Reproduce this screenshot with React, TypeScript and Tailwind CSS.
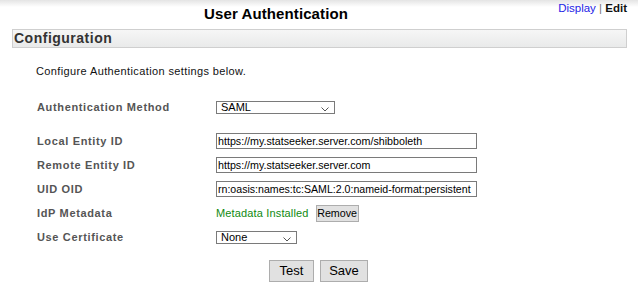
import React from "react";

const Chevron = () => (
  <svg width="8" height="5" viewBox="0 0 8 5" className="absolute right-[5px] bottom-[1px]">
    <path d="M0.5 0.5 L4 4 L7.5 0.5" fill="none" stroke="#555" strokeWidth="1" />
  </svg>
);

function Row({ label, children, className = "" }: { label: string; children: React.ReactNode; className?: string }) {
  return (
    <div className={"flex h-[24px] items-center " + className}>
      <div className="w-[179px] pl-[37px] box-content text-[11px] leading-[13px] font-bold tracking-[0.65px] text-[#555]">
        {label}
      </div>
      <div className="flex items-center">{children}</div>
    </div>
  );
}

export default function App() {
  return (
    <div
      className="w-[638px] h-[288px] bg-[linear-gradient(to_bottom,#e4e4e4_0px,#ffffff_7px)] text-black"
      style={{ fontFamily: '"Liberation Sans", Arial, sans-serif' }}
    >
      <div className="flex items-start">
        <div className="flex-1 pt-[5px] text-center text-[15px] leading-[17px] font-bold tracking-[0.1px]">
          User Authentication
        </div>
        <div className="w-[86px] pt-[1px] pr-[11px] text-right text-[11.5px] leading-[14px]">
          <span className="text-[#2323e6]">Display</span>
          <span className="text-[#777]"> | </span>
          <span className="font-bold text-[#111]">Edit</span>
        </div>
      </div>

      <div className="ml-[12px] mt-[7px] w-[615px] h-[19px] border border-[#cfcfcf] bg-[linear-gradient(to_bottom,#f6f6f6,#e9eaea)] pl-[1px] text-[14px] leading-[17px] font-bold tracking-[0.5px] text-[#333]">
        Configuration
      </div>

      <div className="mt-[17px] pl-[36px] text-[11px] leading-[13px] tracking-[0.38px] text-[#111]">
        Configure Authentication settings below.
      </div>

      <div className="mt-[17px]">
        <Row label="Authentication Method">
          <div className="relative w-[119px] h-[13px] border border-[#7a7a7a] bg-white pl-[4px] text-[11px] leading-[11px]">
            SAML
            <Chevron />
          </div>
        </Row>
        <Row label="Local Entity ID" className="mt-[10px]">
          <div className="w-[261px] h-[16px] border border-[#7a7a7a] bg-white pl-[1px] text-[10.7px] leading-[14px] whitespace-nowrap overflow-hidden">
            https://my.statseeker.server.com/shibboleth
          </div>
        </Row>
        <Row label="Remote Entity ID">
          <div className="w-[261px] h-[16px] border border-[#7a7a7a] bg-white pl-[1px] text-[10.7px] leading-[14px] whitespace-nowrap overflow-hidden">
            https://my.statseeker.server.com
          </div>
        </Row>
        <Row label="UID OID">
          <div className="w-[261px] h-[16px] border border-[#7a7a7a] bg-white pl-[1px] text-[10.6px] leading-[14px] whitespace-nowrap">
            rn:oasis:names:tc:SAML:2.0:nameid-format:persistent
          </div>
        </Row>
        <Row label="IdP Metadata">
          <span className="text-[11px] leading-[13px] tracking-[0.15px] text-[#108a10]">Metadata Installed</span>
          <button className="ml-[7px] w-[43px] h-[17px] border border-[#adadad] bg-[#e1e1e1] text-[10.7px] leading-[14px] text-black">
            Remove
          </button>
        </Row>
        <Row label="Use Certificate">
          <div className="relative w-[81px] h-[13px] border border-[#7a7a7a] bg-white pl-[4px] text-[11px] leading-[11px]">
            None
            <Chevron />
          </div>
        </Row>
      </div>

      <div className="mt-[11px] flex justify-center gap-[6px] pr-[1px]">
        <button className="w-[45px] h-[22px] border border-[#adadad] bg-[#e1e1e1] text-[13px] leading-[20px] text-black">
          Test
        </button>
        <button className="w-[48px] h-[22px] border border-[#adadad] bg-[#e1e1e1] text-[13px] leading-[20px] text-black">
          Save
        </button>
      </div>
    </div>
  );
}
